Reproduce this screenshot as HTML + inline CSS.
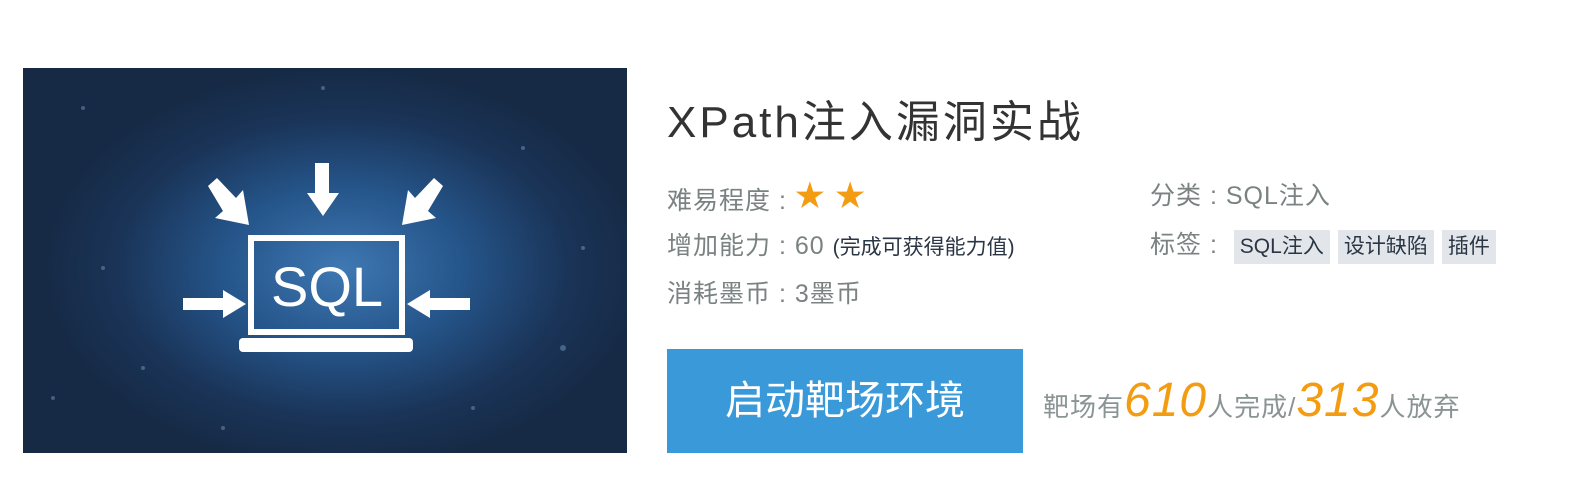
<!DOCTYPE html>
<html><head><meta charset="utf-8"><style>
body{margin:0;width:1578px;height:488px;background:#fff;position:relative;overflow:hidden;font-family:"Liberation Sans","Noto Sans CJK SC",sans-serif}
.a{position:absolute;white-space:nowrap}
.img{left:23px;top:68px;width:604px;height:385px;background:radial-gradient(ellipse 300px 200px at 320px 200px,#3f78b3 0%,#25558a 40%,#1a3458 75%,#162a45 100%)}
.l{font-size:25px;color:#7a8282;letter-spacing:1px}
.tag{display:inline-block;background:#e2e6ea;color:#2b3645;font-size:21px;padding:1px 6px;margin-right:8px;line-height:32px;letter-spacing:0}
</style></head><body>
<div class="a img">
<svg width="604" height="385" viewBox="0 0 604 385" fill="#fff">
<g opacity=".35" fill="#9cc4ee"><circle cx="60" cy="40" r="2"/><circle cx="120" cy="300" r="2"/><circle cx="500" cy="80" r="2"/><circle cx="540" cy="280" r="3"/><circle cx="80" cy="200" r="2"/><circle cx="450" cy="340" r="2"/><circle cx="300" cy="20" r="2"/><circle cx="200" cy="360" r="2"/><circle cx="560" cy="180" r="2"/><circle cx="30" cy="330" r="2"/></g>
<rect x="228" y="170" width="151" height="94" fill="none" stroke="#fff" stroke-width="6"/>
<rect x="216" y="270" width="174" height="14" rx="4"/>
<text x="304" y="238" font-size="56" text-anchor="middle" font-family="Liberation Sans" fill="#fff">SQL</text>
<polygon points="290,95 304,95 304,125 314,125 298,148 282,125 290,125" transform="translate(2,0)"/>
<polygon points="160,230 200,230 200,222 223,236 200,250 200,242 160,242"/>
<polygon points="447,230 407,230 407,222 384,236 407,250 407,242 447,242"/>
<polygon points="185,118 194,110 213,130 220,122 226,157 192,150 200,143"/>
<polygon points="420,118 411,110 392,130 385,122 379,157 413,150 405,143"/>
</svg></div>
<div class="a" style="left:667px;top:86px;font-size:44px;color:#333;letter-spacing:3px">XPath注入漏洞实战</div>
<div class="a l" style="left:667px;top:174px">难易程度 : <span style="color:#f39c12;font-size:30px;position:relative;top:-3px">★ ★</span></div>
<div class="a l" style="left:667px;top:226px">增加能力 : 60 <span style="font-size:21px;color:#2b3645;letter-spacing:0">(完成可获得能力值)</span></div>
<div class="a l" style="left:667px;top:274px">消耗墨币 : 3墨币</div>
<div class="a l" style="left:1150px;top:176px">分类 : SQL注入</div>
<div class="a l" style="left:1150px;top:225px">标签 : &nbsp;<span class="tag">SQL注入</span><span class="tag">设计缺陷</span><span class="tag">插件</span></div>
<div class="a" style="left:667px;top:349px;width:356px;height:104px;background:#3a9ad9;color:#fff;font-size:40px;text-align:center;line-height:104px">启动靶场环境</div>
<div class="a" style="left:1043px;top:373px;font-size:26px;color:#8a9494;letter-spacing:1px">靶场有<i style="color:#f39c12;font-size:48px">610</i>人完成/<i style="color:#f39c12;font-size:48px">313</i>人放弃</div>
</body></html>
